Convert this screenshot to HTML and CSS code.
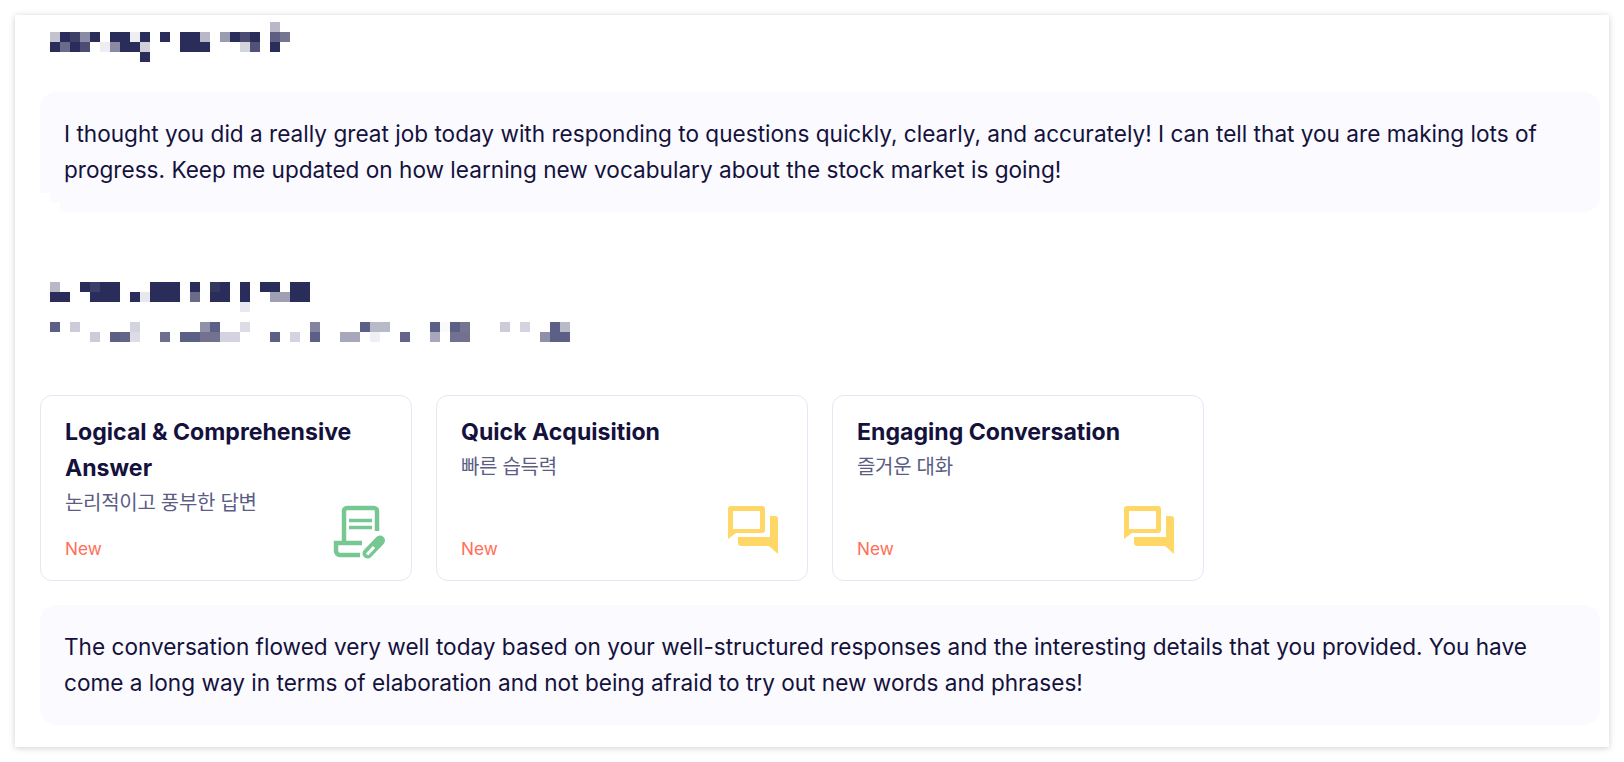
FILE: index.html
```html
<!DOCTYPE html>
<html lang="en">
<head>
    <meta charset="UTF-8">
    <title>Feedback</title>
    <link rel="stylesheet" href="styles.css">
</head>
<body>
    <div class="sheet">
        <!-- blurred name -->
        <svg class="mosaic mosaic-name" viewBox="0 0 24 4" preserveAspectRatio="none" shape-rendering="crispEdges">
            <rect x="22" y="0" width="1" height="1" fill="#b8b8c8"/>
            <g transform="translate(0 1)">
                <rect x="0" width="1" height="1" fill="#c4c4d0"/>
                <rect x="1" width="1" height="1" fill="#2a2d5a"/>
                <rect x="2" width="1" height="1" fill="#3f4068"/>
                <rect x="3" width="1" height="1" fill="#8a8aa4"/>
                <rect x="4" width="1" height="1" fill="#2a2d5a"/>
                <rect x="6" width="2" height="1" fill="#2a2d5a"/>
                <rect x="8" width="1" height="1" fill="#eceef2"/>
                <rect x="9" width="1" height="1" fill="#2a2d5a"/>
                <rect x="11" width="1" height="1" fill="#2a2d5a"/>
                <rect x="13" width="2" height="1" fill="#2a2d5a"/>
                <rect x="15" width="1" height="1" fill="#b8b8c8"/>
                <rect x="17" width="1" height="1" fill="#9c9cb0"/>
                <rect x="18" width="1" height="1" fill="#2a2d5a"/>
                <rect x="19" width="1" height="1" fill="#4a4a72"/>
                <rect x="20" width="1" height="1" fill="#2a2d5a"/>
                <rect x="22" width="1" height="1" fill="#5e5e82"/>
                <rect x="23" width="1" height="1" fill="#757590"/>
            </g>
            <g transform="translate(0 2)">
                <rect x="0" width="1" height="1" fill="#2a2d5a"/>
                <rect x="1" width="1" height="1" fill="#6a6a8a"/>
                <rect x="2" width="1" height="1" fill="#2a2d5a"/>
                <rect x="3" width="1" height="1" fill="#4c4c74"/>
                <rect x="5" width="1" height="1" fill="#eeeef2"/>
                <rect x="6" width="1" height="1" fill="#8a8aa4"/>
                <rect x="7" width="2" height="1" fill="#2a2d5a"/>
                <rect x="9" width="1" height="1" fill="#d0d0da"/>
                <rect x="13" width="3" height="1" fill="#2a2d5a"/>
                <rect x="19" width="1" height="1" fill="#d4d4de"/>
                <rect x="20" width="1" height="1" fill="#525278"/>
                <rect x="22" width="1" height="1" fill="#2a2d5a"/>
            </g>
            <rect x="9" y="3" width="1" height="1" fill="#2a2d5a"/>
        </svg>

        <div class="panel panel-first">
            <p>I thought you did a really great job today with responding to questions quickly, clearly, and accurately! I can tell that you are making lots of progress. Keep me updated on how learning new vocabulary about the stock market is going!</p>
        </div>

        <!-- blurred heading + sub text -->
        <svg class="mosaic mosaic-heading" viewBox="0 0 26 3" preserveAspectRatio="none" shape-rendering="crispEdges">
            <rect x="0" y="0" width="1" height="1" fill="#b8b8c6"/>
            <rect x="3" y="0" width="1" height="1" fill="#2a2d5a"/>
            <rect x="4" y="0" width="1" height="1" fill="#3c3f68"/>
            <rect x="5" y="0" width="2" height="1" fill="#2a2d5a"/>
            <rect x="10" y="0" width="3" height="1" fill="#2a2d5a"/>
            <rect x="14" y="0" width="1" height="1" fill="#2a2d5a"/>
            <rect x="16" y="0" width="1" height="1" fill="#34375f"/>
            <rect x="17" y="0" width="1" height="1" fill="#2a2d5a"/>
            <rect x="19" y="0" width="1" height="1" fill="#2a2d5a"/>
            <rect x="21" y="0" width="2" height="1" fill="#2a2d5a"/>
            <rect x="24" y="0" width="2" height="1" fill="#2a2d5a"/>
            <rect x="0" y="1" width="2" height="1" fill="#2a2d5a"/>
            <rect x="4" y="1" width="3" height="1" fill="#2a2d5a"/>
            <rect x="8" y="1" width="1" height="1" fill="#2a2d5a"/>
            <rect x="9" y="1" width="1" height="1" fill="#e6e8ee"/>
            <rect x="10" y="1" width="3" height="1" fill="#2a2d5a"/>
            <rect x="14" y="1" width="1" height="1" fill="#6a6a8a"/>
            <rect x="16" y="1" width="2" height="1" fill="#2a2d5a"/>
            <rect x="19" y="1" width="1" height="1" fill="#2a2d5a"/>
            <rect x="22" y="1" width="2" height="1" fill="#a0a0b4"/>
            <rect x="24" y="1" width="2" height="1" fill="#2a2d5a"/>
            <rect x="19" y="2" width="1" height="1" fill="#e8e8f0"/>
        </svg>
        <svg class="mosaic mosaic-sub" viewBox="0 0 52 2" preserveAspectRatio="none" shape-rendering="crispEdges">
            <rect x="0" y="0" width="1" height="1" fill="#5c5f86"/>
            <rect x="2" y="0" width="1" height="1" fill="#ccccd8"/>
            <rect x="8" y="0" width="1" height="1" fill="#d4d4e0"/>
            <rect x="15" y="0" width="1" height="1" fill="#9090a8"/>
            <rect x="16" y="0" width="1" height="1" fill="#5c5f86"/>
            <rect x="19" y="0" width="1" height="1" fill="#dcdce6"/>
            <rect x="26" y="0" width="1" height="1" fill="#8484a0"/>
            <rect x="31" y="0" width="1" height="1" fill="#5c5f86"/>
            <rect x="32" y="0" width="2" height="1" fill="#b8bac8"/>
            <rect x="38" y="0" width="1" height="1" fill="#5c5f86"/>
            <rect x="39" y="0" width="1" height="1" fill="#fafafa"/>
            <rect x="40" y="0" width="1" height="1" fill="#5c5f86"/>
            <rect x="41" y="0" width="1" height="1" fill="#757592"/>
            <rect x="45" y="0" width="1" height="1" fill="#ccccd8"/>
            <rect x="47" y="0" width="1" height="1" fill="#d4d4e0"/>
            <rect x="50" y="0" width="1" height="1" fill="#5c5f86"/>
            <rect x="51" y="0" width="1" height="1" fill="#b8bac8"/>
            <rect x="4" y="1" width="1" height="1" fill="#ccccd8"/>
            <rect x="6" y="1" width="1" height="1" fill="#5c5f86"/>
            <rect x="7" y="1" width="1" height="1" fill="#646488"/>
            <rect x="8" y="1" width="1" height="1" fill="#dcdce6"/>
            <rect x="11" y="1" width="1" height="1" fill="#6e6e8e"/>
            <rect x="13" y="1" width="2" height="1" fill="#5c5f86"/>
            <rect x="15" y="1" width="2" height="1" fill="#727290"/>
            <rect x="17" y="1" width="2" height="1" fill="#d4d4e0"/>
            <rect x="22" y="1" width="1" height="1" fill="#5c5f86"/>
            <rect x="24" y="1" width="1" height="1" fill="#d4d4e0"/>
            <rect x="26" y="1" width="1" height="1" fill="#5c5f86"/>
            <rect x="29" y="1" width="2" height="1" fill="#a8a8bc"/>
            <rect x="32" y="1" width="1" height="1" fill="#f0f0f4"/>
            <rect x="35" y="1" width="1" height="1" fill="#646488"/>
            <rect x="38" y="1" width="1" height="1" fill="#a8a8bc"/>
            <rect x="40" y="1" width="2" height="1" fill="#727290"/>
            <rect x="49" y="1" width="1" height="1" fill="#9090a8"/>
            <rect x="50" y="1" width="2" height="1" fill="#5c5f86"/>
        </svg>

        <div class="badges">
            <div class="badge">
                <h3>Logical &amp; Comprehensive Answer</h3>
                <span class="ko">논리적이고 풍부한 답변</span>
                <span class="new">New</span>
                <svg class="badge-icon doc-icon" viewBox="0 0 56 56" fill="none" stroke="#77c793">
                    <path stroke-width="4.500" d="M12 38V7a3 3 0 0 1 3-3h27a3 3 0 0 1 3 3v20"/>
                    <path stroke-width="3.500" d="M17 16.500h23M17 23.500h23"/>
                    <path stroke-width="4.500" d="M30 39H4v8a4 4 0 0 0 4 4h20"/>
                    <path stroke-width="10" stroke-linecap="round" d="M35.500 49.500L48 36.500"/>
                    <path stroke-width="3" stroke="#fff" d="M35 50.500L42 43"/>
                </svg>
            </div>
            <div class="badge">
                <h3>Quick Acquisition</h3>
                <span class="ko">빠른 습득력</span>
                <span class="new">New</span>
                <svg class="badge-icon" viewBox="0 0 56 56" fill="#ffd766">
                    <path fill-rule="evenodd" d="M3 2h31a3 3 0 0 1 3 3v21a3 3 0 0 1-3 3H8l-8 6V5a3 3 0 0 1 3-3zM5 7v18h27V7z"/>
                    <path d="M42 12h5a3 3 0 0 1 3 3v35l-9-8H13a3 3 0 0 1-3-3v-6h32z"/>
                </svg>
            </div>
            <div class="badge">
                <h3>Engaging Conversation</h3>
                <span class="ko">즐거운 대화</span>
                <span class="new">New</span>
                <svg class="badge-icon" viewBox="0 0 56 56" fill="#ffd766">
                    <path fill-rule="evenodd" d="M3 2h31a3 3 0 0 1 3 3v21a3 3 0 0 1-3 3H8l-8 6V5a3 3 0 0 1 3-3zM5 7v18h27V7z"/>
                    <path d="M42 12h5a3 3 0 0 1 3 3v35l-9-8H13a3 3 0 0 1-3-3v-6h32z"/>
                </svg>
            </div>
        </div>

        <div class="panel panel-last">
            <p>The conversation flowed very well today based on your well-structured responses and the interesting details that you provided. You have come a long way in terms of elaboration and not being afraid to try out new words and phrases!</p>
        </div>
    </div>
</body>
</html>
```

FILE: styles.css
```css
html, body {
    margin: 0;
    height: 100%;
    overflow: hidden;
    background: #fff;
}
body {
    padding: 15px;
    box-sizing: border-box;
    font-family: Inter, "Noto Sans CJK KR", sans-serif;
    font-optical-sizing: none;
    color: #14123c;
}
.sheet {
    width: 1594px;
    height: 732px;
    box-sizing: border-box;
    padding: 7px 9px 0 25px;
    background: #fff;
    box-shadow: 0 1px 6px rgba(40, 40, 70, 0.22);
}
.mosaic {
    display: block;
}
.mosaic-name {
    width: 240px;
    height: 40px;
    margin-left: 10px;
}
.mosaic-heading {
    width: 260px;
    height: 30px;
    margin: 70px 0 0 10px;
}
.mosaic-sub {
    width: 520px;
    height: 20px;
    margin: 10px 0 0 10px;
}
.panel {
    position: relative;
    box-sizing: border-box;
    height: 120px;
    padding: 24px;
    background: #fbfaff;
    border-radius: 16px;
}
.panel p {
    margin: 0;
    font-size: 22.6px;
    line-height: 36px;
}
.panel-first {
    margin-top: 30px;
}
.panel-first::before,
.panel-first::after {
    content: "";
    position: absolute;
    bottom: 0;
    background: #fff;
}
.panel-first::before {
    left: 0;
    width: 10px;
    height: 19px;
}
.panel-first::after {
    left: 10px;
    width: 10px;
    height: 10px;
}
.panel-last {
    margin-top: 24px;
}
.badges {
    display: flex;
    gap: 24px;
    margin-top: 53px;
}
.badge {
    position: relative;
    display: flex;
    flex-direction: column;
    box-sizing: border-box;
    width: 372px;
    height: 186px;
    padding: 18px 24px 20px;
    border: 1px solid #e6e6f5;
    border-radius: 12px;
    background: #fff;
}
.badge h3 {
    margin: 0;
    font-size: 23.1px;
    font-weight: 700;
    line-height: 36px;
}
.ko {
    font-size: 20px;
    line-height: 34px;
    letter-spacing: -0.3px;
    color: #5b5d85;
}
.new {
    margin-top: auto;
    font-size: 17.2px;
    line-height: 22px;
    color: #ff6e56;
}
.badge-icon {
    position: absolute;
    right: 23px;
    bottom: 20px;
    width: 56px;
    height: 56px;
}
```
